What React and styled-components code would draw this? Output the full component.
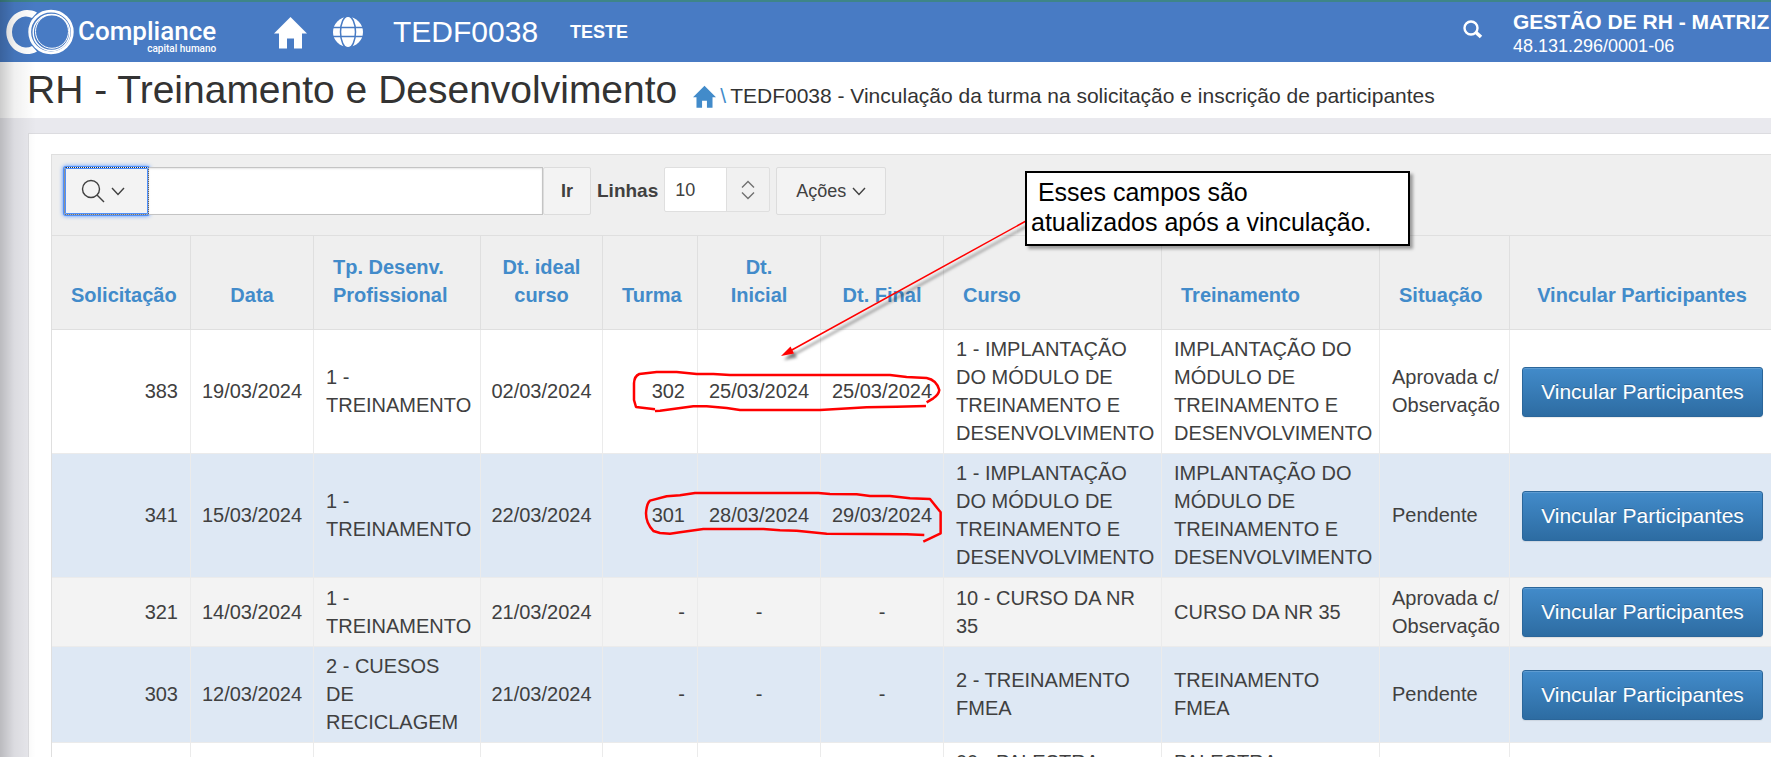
import React, { useState } from 'react';
import styled, { createGlobalStyle } from 'styled-components';

const GlobalStyle = createGlobalStyle`
  * {
    box-sizing: border-box;
  }

  body {
    margin: 0;
    font-family: 'Liberation Sans', Arial, sans-serif;
    color: #404040;
    background: #e9e9ee;
  }

  button,
  input,
  select {
    margin: 0;
    font-family: inherit;
    color: inherit;
  }
`;

const columns = [
  { title: 'Solicitação', width: 139, align: 'right' },
  { title: 'Data', width: 123, align: 'center' },
  { title: 'Tp. Desenv. Profissional', width: 167, align: 'left', headAlign: 'left' },
  { title: 'Dt. ideal curso', width: 122, align: 'center' },
  { title: 'Turma', width: 95, align: 'right' },
  { title: 'Dt. Inicial', width: 123, align: 'center' },
  { title: 'Dt. Final', width: 123, align: 'center' },
  { title: 'Curso', width: 218, align: 'left', headAlign: 'left' },
  { title: 'Treinamento', width: 218, align: 'left', headAlign: 'left' },
  { title: 'Situação', width: 130, align: 'left', headAlign: 'left' },
  { title: 'Vincular Participantes', align: 'center' },
];

const rows = [
  ['383', '19/03/2024', '1 - TREINAMENTO', '02/03/2024', '302', '25/03/2024', '25/03/2024',
    '1 - IMPLANTAÇÃO DO MÓDULO DE TREINAMENTO E DESENVOLVIMENTO',
    'IMPLANTAÇÃO DO MÓDULO DE TREINAMENTO E DESENVOLVIMENTO', 'Aprovada c/ Observação'],
  ['341', '15/03/2024', '1 - TREINAMENTO', '22/03/2024', '301', '28/03/2024', '29/03/2024',
    '1 - IMPLANTAÇÃO DO MÓDULO DE TREINAMENTO E DESENVOLVIMENTO',
    'IMPLANTAÇÃO DO MÓDULO DE TREINAMENTO E DESENVOLVIMENTO', 'Pendente'],
  ['321', '14/03/2024', '1 - TREINAMENTO', '21/03/2024', '-', '-', '-',
    '10 - CURSO DA NR 35', 'CURSO DA NR 35', 'Aprovada c/ Observação'],
  ['303', '12/03/2024', '2 - CUESOS DE RECICLAGEM', '21/03/2024', '-', '-', '-',
    '2 - TREINAMENTO FMEA', 'TREINAMENTO FMEA', 'Pendente'],
  ['302', '12/03/2024', '1 - TREINAMENTO', '21/03/2024', '-', '-', '-',
    '00 - PALESTRA SEGURANÇA DO TRABALHO COM MÁQUINAS',
    'PALESTRA SEGURANÇA DO TRABALHO COM MÁQUINAS', 'Pendente'],
];

const rowColors = ['#ffffff', '#dee8f4', '#f3f3f3', '#dee8f4', '#ffffff'];

const Page = styled.div`
  position: relative;
  height: 100vh;
  overflow: hidden;

  /* sombra do menu lateral recolhido */
  &::before {
    content: '';
    position: absolute;
    z-index: 5;
    inset: 0 auto 0 0;
    width: 36px;
    background: linear-gradient(to right, rgba(0, 0, 0, 0.2), rgba(0, 0, 0, 0.06) 40%, transparent);
    pointer-events: none;
  }
`;

const TopBar = styled.header`
  display: flex;
  align-items: center;
  height: 62px;
  padding-left: 4px;
  border-top: 2px solid #3e8588;
  background: #487bc4;
  color: #fff;
`;

const Brand = styled.a`
  display: flex;
  align-items: center;
  width: 270px;
  color: #fff;
  text-decoration: none;
`;

const BrandText = styled.span`
  display: flex;
  flex-direction: column;
  align-items: flex-end;
  padding: 12px 0 0 4px;
  font-family: Roboto, sans-serif;
`;

const BrandName = styled.span`
  font-size: 26px;
  font-weight: 500;
  line-height: 22px;
`;

const BrandTagline = styled.span`
  font-size: 10px;
  font-weight: 500;
  line-height: 14px;
`;

const IconLink = styled.a`
  display: flex;
  color: ${(props) => props.$color || '#fff'};
`;

const TopNav = styled.nav`
  display: flex;
  flex: 1;
  align-items: center;
`;

const TopGlobe = styled(IconLink)`
  margin: 0 30px 0 26px;
`;

const PageCode = styled.span`
  font-size: 30px;
`;

const Environment = styled.strong`
  margin-left: 32px;
  font-size: 18px;
`;

const SearchButton = styled.button`
  display: flex;
  margin-right: 30px;
  padding: 0 0 6px;
  border: 0;
  background: none;
`;

const Company = styled.div`
  display: flex;
  flex-direction: column;
  width: 258px;
  padding-top: 2px;
  white-space: nowrap;
`;

const CompanyName = styled.strong`
  font-size: 21px;
  line-height: 26px;
`;

const CompanyCode = styled.span`
  font-size: 18px;
  line-height: 22px;
`;

const TitleBar = styled.div`
  display: flex;
  align-items: baseline;
  height: 56px;
  padding-left: 27px;
  background: #fff;
  color: #333;
`;

const Title = styled.h1`
  margin: 0 16px 0 0;
  font-size: 39px;
  font-weight: 400;
  line-height: 56px;
`;

const Breadcrumb = styled.nav`
  display: flex;
  align-items: baseline;
  gap: 4px;
  font-size: 21px;
`;

const HomeLink = styled(IconLink)`
  align-self: center;
`;

const Separator = styled.span`
  color: #428bca;
`;

const Panel = styled.main`
  margin: 15px 0 0 28px;
  padding: 20px 0 0 22px;
  border: 1px solid #dcdce0;
  border-right: 0;
  background: #fff;
`;

const Report = styled.section`
  border: 1px solid #dfdfdf;
  border-right: 0;
`;

const Toolbar = styled.div`
  display: flex;
  gap: 6px;
  padding: 12px 12px 20px;
  border-bottom: 1px solid #dfdfdf;
  background: #efefef;
`;

const SearchGroup = styled.div`
  display: flex;
`;

const ToolButton = styled.button`
  display: flex;
  align-items: center;
  justify-content: center;
  gap: 6px;
  width: ${(props) => props.$width}px;
  height: 48px;
  padding: 0;
  border: 1px solid #dcdcdc;
  border-radius: 2px;
  background: #f3f3f3;
  font-size: 18px;
  font-weight: ${(props) => (props.$bold ? 700 : 400)};
`;

const ColumnSearchButton = styled(ToolButton)`
  padding-right: 8px;
  border: 1px dotted #333;
  box-shadow: 0 0 0 1px #4d90fe, inset 0 0 0 1px #4d90fe, 0 0 4px 1px #4d90fe;
`;

const SearchInput = styled.input`
  width: 394px;
  height: 48px;
  padding: 0 12px;
  border: 1px solid #c4c4c4;
  border-left: 0;
  background: #fff;
  box-shadow: inset 0 1px 2px rgba(0, 0, 0, 0.1);
  font-size: 18px;
`;

const RowsLabel = styled.label`
  font-size: 19px;
  font-weight: 700;
  line-height: 48px;
`;

const SelectBox = styled.div`
  display: flex;
  position: relative;
  width: 106px;
  height: 45px;
  border: 1px solid #dfdfdf;
  border-radius: 2px;
  background: linear-gradient(to right, #fff 61px, #dfdfdf 61px, #dfdfdf 62px, #f1f1f1 62px);

  svg {
    position: absolute;
    top: 12px;
    right: 14px;
    pointer-events: none;
  }
`;

const Select = styled.select`
  width: 100%;
  padding: 0 10px;
  border: 0;
  background: none;
  appearance: none;
  font-size: 18px;
`;

const Table = styled.table`
  width: 100%;
  min-width: 1723px;
  table-layout: fixed;
  border-collapse: separate;
  border-spacing: 0;
  font-size: 20px;
  line-height: 28px;
`;

const HeadCell = styled.th`
  padding: 17px 19px 20px;
  border-right: 1px solid #dfdfdf;
  border-bottom: 1px solid #dfdfdf;
  background: #efefef;
  text-align: ${(props) => props.$align || 'center'};
  vertical-align: bottom;
`;

const SortLink = styled.a`
  color: #428bca;
  text-decoration: none;
`;

const Row = styled.tr`
  background: ${(props) => props.$color};
`;

const Cell = styled.td`
  padding: 5px ${(props) => (props.$align === 'right' ? 12 : 8)}px 6px
    ${(props) => (props.$align === 'center' ? 8 : 12)}px;
  border-right: 1px solid #ebebeb;
  border-bottom: 1px solid #ebebeb;
  text-align: ${(props) => props.$align};
`;

const ActionCell = styled.td`
  padding: 9px 12px;
  border-bottom: 1px solid #ebebeb;
`;

const LinkButton = styled.button`
  display: block;
  width: 241px;
  height: 50px;
  padding: 0;
  border: 1px solid #2b669a;
  border-radius: 3px;
  background: linear-gradient(#428bca, #2d6ca2);
  box-shadow: inset 0 1px 0 rgba(255, 255, 255, 0.15), 0 1px 1px rgba(0, 0, 0, 0.08);
  color: #fff;
  font-size: 21px;
  text-shadow: 0 -1px 0 rgba(0, 0, 0, 0.2);
`;

const Callout = styled.div`
  position: absolute;
  z-index: 3;
  top: 171px;
  left: 1025px;
  width: 385px;
  padding: 4px 4px 7px;
  border: 2px solid #000;
  background: #fff;
  box-shadow: 3px 3px 3px rgba(0, 0, 0, 0.35);
  color: #000;
  font-size: 25px;
  line-height: 30px;
  white-space: pre-line;
`;

const Markup = styled.svg`
  position: absolute;
  z-index: 2;
  top: 200px;
  left: 600px;
  pointer-events: none;
`;

const Logo = () => (
  <svg width="70" height="46" viewBox="0 0 70 46" fill="none" stroke="#fff" aria-hidden="true">
    <path
      d="M33 3.500A21 22 0 1 0 33 42.500L28 37A14 15.500 0 1 1 28 9Z"
      fill="#fff"
      stroke="none"
    />
    <ellipse cx="47" cy="23" rx="23" ry="23" fill="#487bc4" stroke="none" />
    <ellipse cx="47" cy="23" rx="21.300" ry="20.800" strokeWidth="2.800" />
    <ellipse cx="47.500" cy="23.500" rx="18.300" ry="18" strokeWidth="1.400" />
    <ellipse cx="48" cy="22.500" rx="16.500" ry="16.800" strokeWidth="1" />
  </svg>
);

const HomeIcon = ({ size }) => (
  <svg width={size} height={size} viewBox="0 0 33 33" fill="currentColor" aria-hidden="true">
    <path d="M16.500 1L33 17.500H28V32.500H20V22.500H13V32.500H5V17.500H0Z" />
  </svg>
);

const GlobeIcon = () => (
  <svg width="30" height="30" viewBox="0 0 30 30" aria-hidden="true">
    <circle cx="15" cy="15" r="15" fill="#fff" />
    <g fill="none" stroke="#487bc4" strokeWidth="1.500">
      <ellipse cx="15" cy="15" rx="7.500" ry="16" />
      <path d="M0 10.500H30M0 19.500H30" />
    </g>
  </svg>
);

const BoldSearchIcon = () => (
  <svg width="20" height="19" viewBox="0 0 20 19" fill="none" stroke="#fff" aria-hidden="true">
    <circle cx="8" cy="8" r="6.500" strokeWidth="2.400" />
    <path d="M12.500 12L18 17" strokeWidth="3.600" />
  </svg>
);

const ThinSearchIcon = () => (
  <svg width="24" height="24" viewBox="0 0 24 24" fill="none" stroke="#404040" strokeWidth="1.400" aria-hidden="true">
    <circle cx="10" cy="10" r="8.500" />
    <path d="M16 16L23 23" />
  </svg>
);

const ChevronIcon = () => (
  <svg width="14" height="9" viewBox="0 0 14 9" fill="none" stroke="#404040" strokeWidth="1.400" aria-hidden="true">
    <path d="M1 1L7 7.500L13 1" />
  </svg>
);

const UpDownIcon = () => (
  <svg width="14" height="20" viewBox="0 0 14 20" fill="none" stroke="#707070" strokeWidth="1.400" aria-hidden="true">
    <path d="M1 7.500L7 1.500L13 7.500M1 12.500L7 18.500L13 12.500" />
  </svg>
);

const Annotations = () => (
  <>
    <Markup width="430" height="360" viewBox="0 0 430 360" fill="none" stroke="#f00">
      <g filter="url(#arrow-shadow)">
        <path d="M426 21L190 151" strokeWidth="1.500" />
        <path d="M181 156L190.500 146.500L194 153.500Z" fill="#f00" stroke="none" />
      </g>
      <g transform="translate(0 140) scale(0.3333)" strokeWidth="7.500" strokeLinejoin="round">
        <path d="M978 198L890 200L800 202L750 205L660 210H420L380 204L320 199H280L180 212L165 213" />
        <path d="M165 208L108 201L102 180V130Q103 108 118 102L170 96H230L290 102H340L390 105H870L920 111L980 114Q1010 120 1018 150Q1016 164 1000 175L980 187" />
        <path d="M973 585L920 583L680 581L590 572L540 571L490 567H310L240 577L210 581L180 579L160 573Q138 550 138 520Q140 490 150 482L200 469L240 466L285 459H655L690 462L770 463L810 468H870L930 475L990 477L1022 517V580L970 605" />
      </g>
      <defs>
        <filter id="arrow-shadow" x="-10%" y="-10%" width="120%" height="130%">
          <feDropShadow dx="3" dy="4" stdDeviation="1.500" floodColor="#000" floodOpacity="0.5" />
        </filter>
      </defs>
    </Markup>
    <Callout>
      {'\u00a0Esses campos são\natualizados após a vinculação.'}
    </Callout>
  </>
);

const ReportToolbar = () => {
  const [search, setSearch] = useState('');
  const [pageSize, setPageSize] = useState('10');

  return (
    <Toolbar>
      <SearchGroup>
        <ColumnSearchButton type="button" $width={85} aria-label="Selecionar colunas">
          <ThinSearchIcon />
          <ChevronIcon />
        </ColumnSearchButton>
        <SearchInput
          aria-label="Pesquisar"
          value={search}
          onChange={(e) => setSearch(e.target.value)}
        />
        <ToolButton type="button" $width={48} $bold>Ir</ToolButton>
      </SearchGroup>
      <RowsLabel htmlFor="page-size">Linhas</RowsLabel>
      <SelectBox>
        <Select id="page-size" value={pageSize} onChange={(e) => setPageSize(e.target.value)}>
          <option>10</option>
          <option>25</option>
          <option>50</option>
        </Select>
        <UpDownIcon />
      </SelectBox>
      <ToolButton type="button" $width={110}>
        Ações
        <ChevronIcon />
      </ToolButton>
    </Toolbar>
  );
};

const ReportTable = () => (
  <Table>
    <colgroup>
      {columns.map(({ title, width }) => (
        <col key={title} width={width} />
      ))}
    </colgroup>
    <thead>
      <tr>
        {columns.map(({ title, headAlign }) => (
          <HeadCell key={title} scope="col" $align={headAlign}>
            <SortLink href="#">{title}</SortLink>
          </HeadCell>
        ))}
      </tr>
    </thead>
    <tbody>
      {rows.map((row, index) => (
        <Row key={row[0]} $color={rowColors[index]}>
          {row.map((value, i) => (
            <Cell key={columns[i].title} $align={columns[i].align}>{value}</Cell>
          ))}
          <ActionCell>
            <LinkButton type="button">Vincular Participantes</LinkButton>
          </ActionCell>
        </Row>
      ))}
    </tbody>
  </Table>
);

const App = () => (
  <Page>
    <GlobalStyle />
    <TopBar>
      <Brand href="#">
        <Logo />
        <BrandText>
          <BrandName>Compliance</BrandName>
          <BrandTagline>capital humano</BrandTagline>
        </BrandText>
      </Brand>
      <TopNav>
        <IconLink href="#" aria-label="Início">
          <HomeIcon size={33} />
        </IconLink>
        <TopGlobe href="#" aria-label="Idioma">
          <GlobeIcon />
        </TopGlobe>
        <PageCode>TEDF0038</PageCode>
        <Environment>TESTE</Environment>
      </TopNav>
      <SearchButton type="button" aria-label="Buscar">
        <BoldSearchIcon />
      </SearchButton>
      <Company>
        <CompanyName>GESTÃO DE RH - MATRIZ</CompanyName>
        <CompanyCode>48.131.296/0001-06</CompanyCode>
      </Company>
    </TopBar>
    <TitleBar>
      <Title>RH - Treinamento e Desenvolvimento</Title>
      <Breadcrumb>
        <HomeLink href="#" $color="#428bca" aria-label="Página inicial">
          <HomeIcon size={23} />
        </HomeLink>
        <Separator>\</Separator>
        <span>TEDF0038 - Vinculação da turma na solicitação e inscrição de participantes</span>
      </Breadcrumb>
    </TitleBar>
    <Panel>
      <Report>
        <ReportToolbar />
        <ReportTable />
      </Report>
    </Panel>
    <Annotations />
  </Page>
);

export default App;
